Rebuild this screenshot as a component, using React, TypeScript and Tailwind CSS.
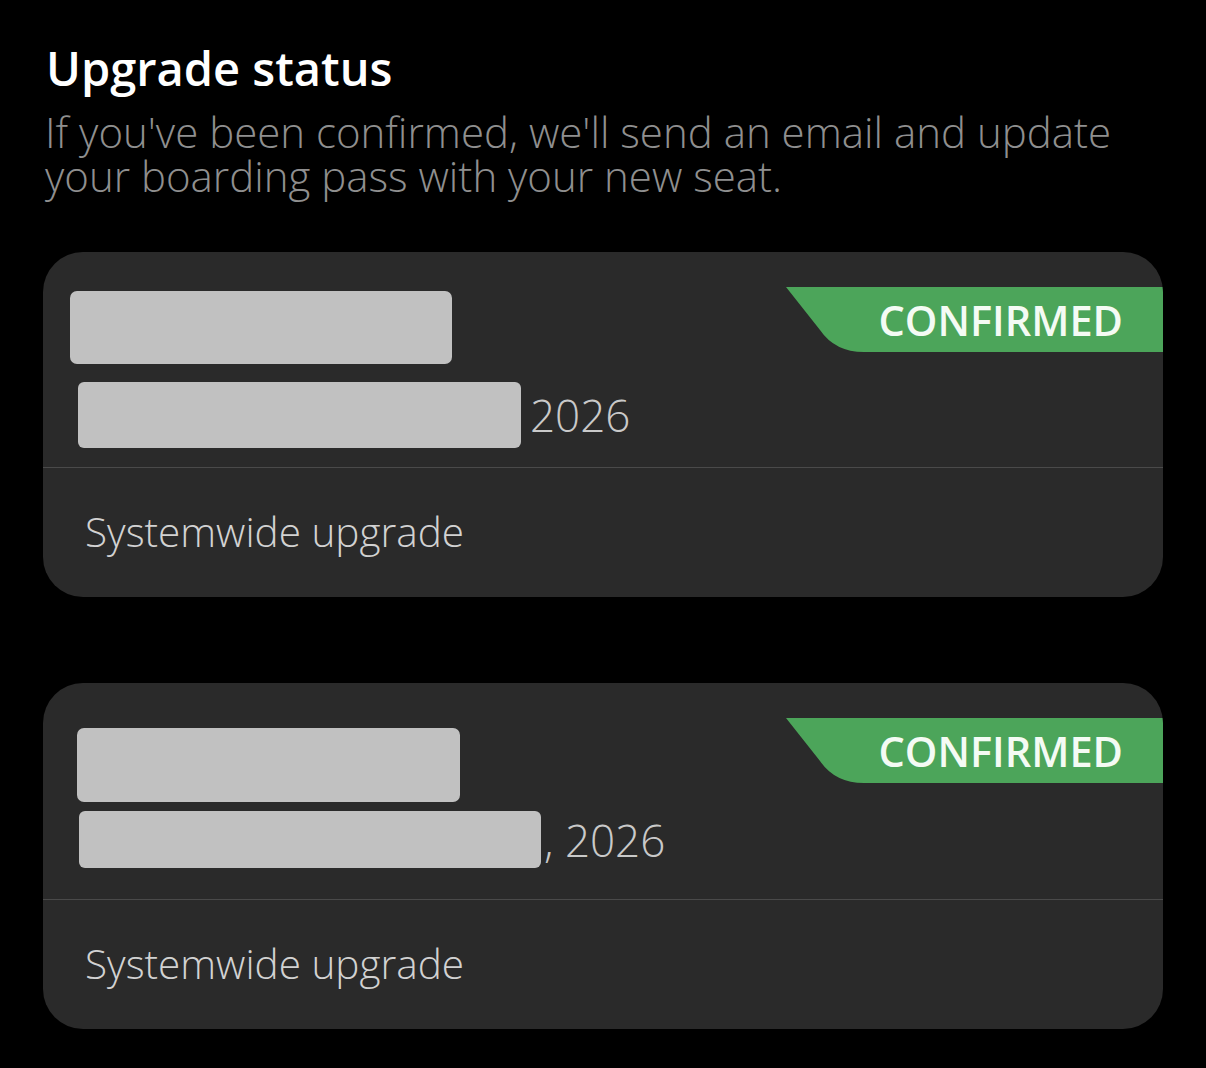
import React from "react";

function Badge() {
  return (
    <div className="absolute right-0 top-[35px] h-[65px] w-[377px]">
      <svg className="absolute inset-0" width="377" height="65" viewBox="0 0 377 65">
        <path d="M0 0 L34 43 Q49 65 78 65 H377 V0 Z" fill="#4ca55a" />
      </svg>
      <div className="relative flex h-full items-center justify-end pr-[40px] pt-[2px] text-[41.5px] font-semibold text-[#f4fbf4]">
        CONFIRMED
      </div>
    </div>
  );
}

function Card({ tail, top }: { tail: string; top: "a" | "b" }) {
  return (
    <div className="relative w-[1120px] overflow-hidden rounded-[40px] bg-[#2a2a2a]">
      <Badge />
      {top === "a" ? (
        <div className="flex flex-col pt-[39px] pb-[19px]">
          <div className="ml-[27px] h-[73px] w-[382px] rounded-[7px] bg-[#c1c1c1]" />
          <div className="mt-[18px] flex items-center">
            <div className="ml-[35px] h-[66px] w-[443px] rounded-[6px] bg-[#c1c1c1]" />
            <span className="ml-[9px] text-[44px] font-light leading-none text-[#c9c9c9]">{tail}</span>
          </div>
        </div>
      ) : (
        <div className="flex flex-col pt-[45px] pb-[31px]">
          <div className="ml-[34px] h-[74px] w-[383px] rounded-[7px] bg-[#c1c1c1]" />
          <div className="mt-[9px] flex items-center">
            <div className="ml-[36px] h-[57px] w-[462px] rounded-[6px] bg-[#c1c1c1]" />
            <span className="ml-[3px] text-[44px] font-light leading-none text-[#c9c9c9]">{tail}</span>
          </div>
        </div>
      )}
      <div className="h-px bg-[#4a4a4a]" />
      <div className="flex h-[129px] items-center pl-[42px] text-[40.5px] font-light text-[#d2d2d2]">
        Systemwide upgrade
      </div>
    </div>
  );
}

export default function App() {
  return (
    <div
      className="min-h-[1068px] w-[1206px] bg-black pl-[43px] pt-[40px]"
      style={{ fontFamily: '"Open Sans", "Noto Sans", sans-serif' }}
    >
      <h1 className="pl-[3px] text-[47px] font-semibold leading-[56px] text-white">Upgrade status</h1>
      <div className="mt-[14px] flex flex-col pl-[2px] text-[42px] font-light text-[#8f8f8f]">
        <span className="block h-[44px] leading-[44px]">
          If you've been confirmed, we'll send an email and update
        </span>
        <span className="block h-[44px] leading-[44px]">your boarding pass with your new seat.</span>
      </div>
      <div className="mt-[54px] flex flex-col gap-[86px]">
        <Card tail="2026" top="a" />
        <Card tail=", 2026" top="b" />
      </div>
    </div>
  );
}
